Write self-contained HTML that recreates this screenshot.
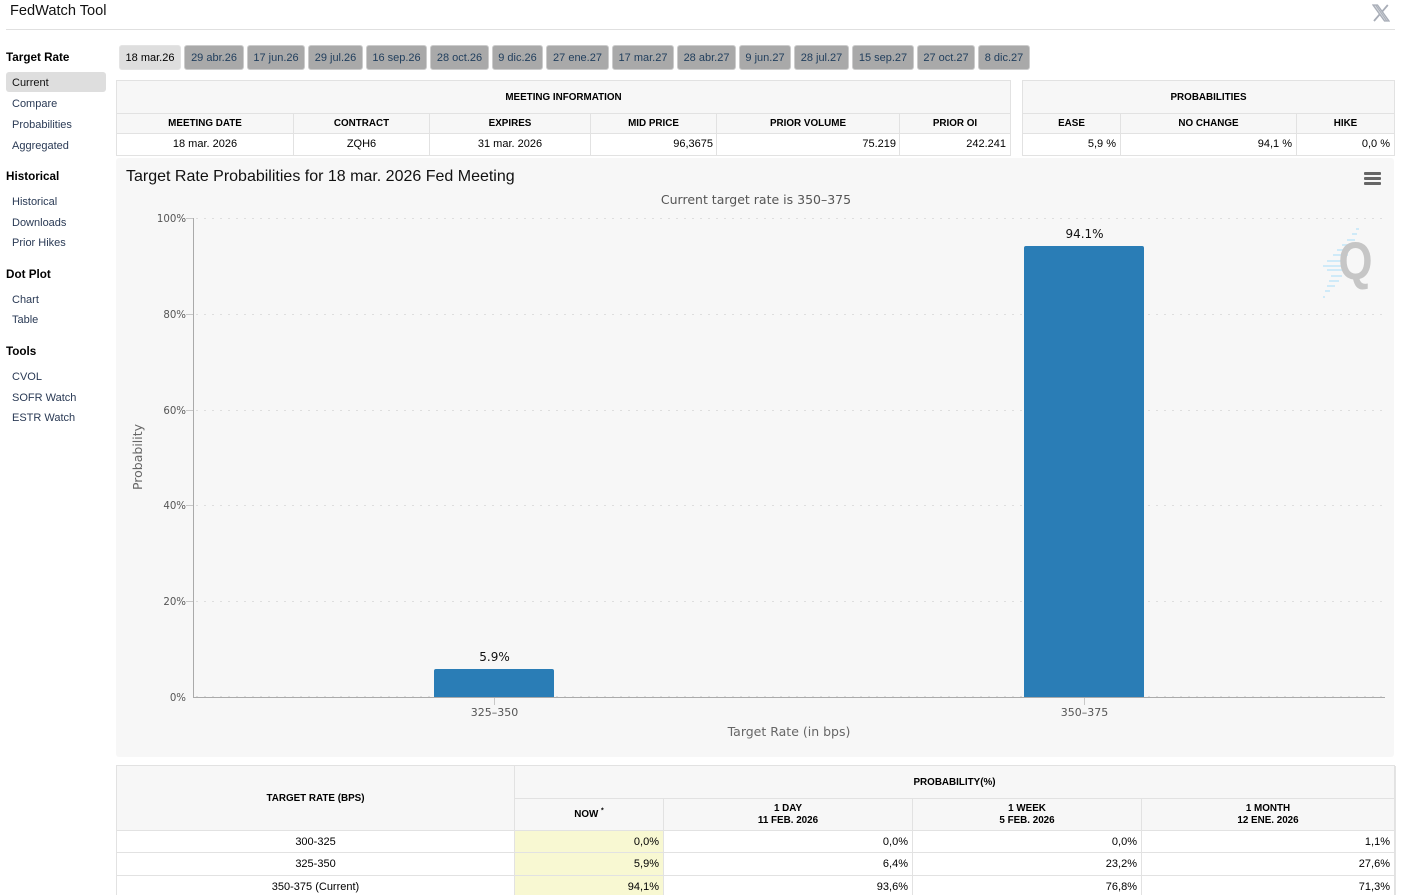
<!DOCTYPE html>
<html><head><meta charset="utf-8"><title>FedWatch Tool</title>
<style>
html,body{margin:0;padding:0;background:#fff;width:1404px;height:895px;overflow:hidden;font-family:"Liberation Sans",Arial,sans-serif;color:#000}
#w{position:relative;width:1404px;height:895px;overflow:hidden}
.a{position:absolute;white-space:nowrap}
.h{font-size:11.7px;font-weight:bold;color:#000;left:6px}
.n{font-size:11px;color:#2a3a55;left:12px}
.tab{position:absolute;top:45px;height:25px;line-height:24px;text-align:center;font-size:11px;color:#1f3d5c;background:#a9a9a9;border:1px solid #ccc;border-radius:3px;box-sizing:border-box}
.tab.on{background:#dedede;color:#000;border-color:#e4e4e4}
.c{position:absolute;box-sizing:border-box;border:1px solid #e2e2e2;font-size:11px;overflow:hidden;white-space:nowrap;margin:0}
.th{background:#f7f7f7;font-weight:bold;text-align:center;font-size:9.85px}
.td{background:#fff;text-align:center}
.r{text-align:right;padding-right:4px}
.r3{padding-right:3px}
.y{background:#f8f8d2}
</style></head><body><div id="w">
<div class="a" style="left:10px;top:3px;font-size:14.6px;color:#111">FedWatch Tool</div>
<div class="a" style="left:6px;top:29px;width:1389px;height:1px;background:#e0e0e0"></div>
<svg class="a" style="left:1372px;top:4px" width="18" height="18" viewBox="0 0 18 18"><path d="M1 1h4.500L17 17h-4.500z" fill="#d4d7dc" stroke="#a8adb7" stroke-width="1.300"/><path d="M4 1.500 14.500 16.500" stroke="#a8adb7" stroke-width="1" fill="none"/><path d="M15.800 1 10.300 7.400M7.800 10.200 2 17" stroke="#a8adb7" stroke-width="1.800" fill="none"/></svg>

<div class="a h" style="top:51px">Target Rate</div>
<div class="a" style="left:6px;top:72px;width:100px;height:20px;background:#dedede;border-radius:3px"></div>
<div class="a n" style="top:77px;color:#111">Current</div>
<div class="a n" style="top:98px">Compare</div>
<div class="a n" style="top:119px">Probabilities</div>
<div class="a n" style="top:140px">Aggregated</div>
<div class="a h" style="top:170px">Historical</div>
<div class="a n" style="top:196px">Historical</div>
<div class="a n" style="top:217px">Downloads</div>
<div class="a n" style="top:237px">Prior Hikes</div>
<div class="a h" style="top:268px">Dot Plot</div>
<div class="a n" style="top:294px">Chart</div>
<div class="a n" style="top:314px">Table</div>
<div class="a h" style="top:345px">Tools</div>
<div class="a n" style="top:371px">CVOL</div>
<div class="a n" style="top:392px">SOFR Watch</div>
<div class="a n" style="top:412px">ESTR Watch</div>

<div class="tab on" style="left:119px;width:62px">18 mar.26</div>
<div class="tab" style="left:184px;width:60px">29 abr.26</div>
<div class="tab" style="left:247px;width:58px">17 jun.26</div>
<div class="tab" style="left:308px;width:55px">29 jul.26</div>
<div class="tab" style="left:366px;width:61px">16 sep.26</div>
<div class="tab" style="left:430px;width:59px">28 oct.26</div>
<div class="tab" style="left:492px;width:51px">9 dic.26</div>
<div class="tab" style="left:546px;width:63px">27 ene.27</div>
<div class="tab" style="left:612px;width:62px">17 mar.27</div>
<div class="tab" style="left:677px;width:59px">28 abr.27</div>
<div class="tab" style="left:739px;width:52px">9 jun.27</div>
<div class="tab" style="left:794px;width:55px">28 jul.27</div>
<div class="tab" style="left:852px;width:62px">15 sep.27</div>
<div class="tab" style="left:917px;width:58px">27 oct.27</div>
<div class="tab" style="left:978px;width:52px">8 dic.27</div>

<div class="c th" style="left:116px;top:80px;width:895px;height:34px;line-height:34px">MEETING INFORMATION</div>
<div class="c th" style="left:116px;top:113px;width:178px;height:21px;line-height:20px">MEETING DATE</div>
<div class="c th" style="left:293px;top:113px;width:137px;height:21px;line-height:20px">CONTRACT</div>
<div class="c th" style="left:429px;top:113px;width:162px;height:21px;line-height:20px">EXPIRES</div>
<div class="c th" style="left:590px;top:113px;width:127px;height:21px;line-height:20px">MID PRICE</div>
<div class="c th" style="left:716px;top:113px;width:184px;height:21px;line-height:20px">PRIOR VOLUME</div>
<div class="c th" style="left:899px;top:113px;width:112px;height:21px;line-height:20px">PRIOR OI</div>
<div class="c td" style="left:116px;top:133px;width:178px;height:23px;line-height:21px">18 mar. 2026</div>
<div class="c td" style="left:293px;top:133px;width:137px;height:23px;line-height:21px">ZQH6</div>
<div class="c td" style="left:429px;top:133px;width:162px;height:23px;line-height:21px">31 mar. 2026</div>
<div class="c td r r3" style="left:590px;top:133px;width:127px;height:23px;line-height:21px">96,3675</div>
<div class="c td r r3" style="left:716px;top:133px;width:184px;height:23px;line-height:21px">75.219</div>
<div class="c td r" style="left:899px;top:133px;width:112px;height:23px;line-height:21px">242.241</div>

<div class="c th" style="left:1022px;top:80px;width:373px;height:34px;line-height:34px">PROBABILITIES</div>
<div class="c th" style="left:1022px;top:113px;width:99px;height:21px;line-height:20px">EASE</div>
<div class="c th" style="left:1120px;top:113px;width:177px;height:21px;line-height:20px">NO CHANGE</div>
<div class="c th" style="left:1296px;top:113px;width:99px;height:21px;line-height:20px">HIKE</div>
<div class="c td r" style="left:1022px;top:133px;width:99px;height:23px;line-height:21px">5,9 %</div>
<div class="c td r" style="left:1120px;top:133px;width:177px;height:23px;line-height:21px">94,1 %</div>
<div class="c td r" style="left:1296px;top:133px;width:99px;height:23px;line-height:21px">0,0 %</div>

<div class="a" style="left:116px;top:158px;width:1278px;height:599px;background:#f7f7f7;border-radius:3px"></div>
<svg class="a" style="left:116px;top:158px" width="1278" height="599" viewBox="116 158 1278 599">
<text x="126" y="181" font-family="Liberation Sans" font-size="16" fill="#111">Target Rate Probabilities for 18 mar. 2026 Fed Meeting</text>
<text x="756" y="204" text-anchor="middle" font-family="DejaVu Sans" font-size="12.500" fill="#555">Current target rate is 350–375</text>
<g fill="#666"><rect x="1364" y="172" width="17" height="3" rx="1"/><rect x="1364" y="177" width="17" height="3" rx="1"/><rect x="1364" y="182" width="17" height="3" rx="1"/></g>
<g stroke="#dedede" stroke-width="1" stroke-dasharray="2 6">
<path d="M196 218.500H1385M196 314.500H1385M196 410.500H1385M196 505.500H1385M196 601.500H1385M196 696.500H1385"/></g>
<g stroke="#c8c8c8"><path d="M186 218.500H193M186 314.500H193M186 410.500H193M186 505.500H193M186 601.500H193"/><path d="M494.500 698V705M1084.500 698V705"/></g>
<path d="M193.500 218V697.500H1385" stroke="#aaa" fill="none"/>
<path d="M434 697V671a2 2 0 0 1 2-2H552a2 2 0 0 1 2 2V697Z" fill="#2a7db6"/>
<path d="M1024 697V248a2 2 0 0 1 2-2H1142a2 2 0 0 1 2 2V697Z" fill="#2a7db6"/>
<g font-family="DejaVu Sans" font-size="10.200" fill="#555" text-anchor="end">
<text x="186" y="222">100%</text><text x="186" y="318">80%</text><text x="186" y="414">60%</text><text x="186" y="509">40%</text><text x="186" y="605">20%</text><text x="186" y="701">0%</text></g>
<g font-family="DejaVu Sans" font-size="11" fill="#555" text-anchor="middle"><text x="494.500" y="716">325–350</text><text x="1084.500" y="716">350–375</text></g>
<g font-family="DejaVu Sans" font-size="12" fill="#111" text-anchor="middle"><text x="494.500" y="661">5.9%</text><text x="1084.500" y="238">94.1%</text></g>
<text x="789" y="736" text-anchor="middle" font-family="DejaVu Sans" font-size="12.500" fill="#666">Target Rate (in bps)</text>
<text transform="translate(142 457) rotate(-90)" text-anchor="middle" font-family="DejaVu Sans" font-size="12.500" fill="#666">Probability</text>
<g fill="#cfeaf8"><rect x="1356" y="228" width="3" height="2"/><rect x="1352" y="233" width="5" height="2"/><rect x="1347" y="239" width="8" height="2"/><rect x="1342" y="244" width="10" height="2"/><rect x="1337" y="249" width="13" height="2"/><rect x="1333" y="254" width="15" height="2"/><rect x="1327" y="260" width="19" height="2"/><rect x="1323" y="265" width="19" height="2"/><rect x="1327" y="269" width="15" height="2"/><rect x="1331" y="275" width="11" height="2"/><rect x="1329" y="280" width="10" height="2"/><rect x="1327" y="285" width="8" height="2"/><rect x="1325" y="290" width="5" height="2"/><rect x="1323" y="296" width="2" height="2"/></g>
<text transform="translate(1355.500 279) scale(.95 1.150)" text-anchor="middle" font-family="Liberation Sans" font-weight="bold" font-size="46" fill="#c6c6c6">Q</text>
</svg>

<div class="a" style="left:1394px;top:766px;width:2px;height:129px;background:#e4e4e4"></div>
<div class="c th" style="left:116px;top:765px;width:399px;height:66px;line-height:65px">TARGET RATE (BPS)</div>
<div class="c th" style="left:514px;top:765px;width:881px;height:34px;line-height:34px">PROBABILITY(%)</div>
<div class="c th" style="left:514px;top:798px;width:150px;height:33px;line-height:32px">NOW <sup style="font-size:7px;line-height:0">*</sup></div>
<div class="c th" style="left:663px;top:798px;width:250px;height:33px;line-height:12px;padding-top:4px">1 DAY<br>11 FEB. 2026</div>
<div class="c th" style="left:912px;top:798px;width:230px;height:33px;line-height:12px;padding-top:4px">1 WEEK<br>5 FEB. 2026</div>
<div class="c th" style="left:1141px;top:798px;width:254px;height:33px;line-height:12px;padding-top:4px">1 MONTH<br>12 ENE. 2026</div>

<div class="c td" style="left:116px;top:830px;width:399px;height:23px;line-height:22px">300-325</div>
<div class="c td r y" style="left:514px;top:830px;width:150px;height:23px;line-height:22px">0,0%</div>
<div class="c td r" style="left:663px;top:830px;width:250px;height:23px;line-height:22px">0,0%</div>
<div class="c td r" style="left:912px;top:830px;width:230px;height:23px;line-height:22px">0,0%</div>
<div class="c td r" style="left:1141px;top:830px;width:254px;height:23px;line-height:22px">1,1%</div>

<div class="c td" style="left:116px;top:852px;width:399px;height:24px;line-height:22px">325-350</div>
<div class="c td r y" style="left:514px;top:852px;width:150px;height:24px;line-height:22px">5,9%</div>
<div class="c td r" style="left:663px;top:852px;width:250px;height:24px;line-height:22px">6,4%</div>
<div class="c td r" style="left:912px;top:852px;width:230px;height:24px;line-height:22px">23,2%</div>
<div class="c td r" style="left:1141px;top:852px;width:254px;height:24px;line-height:22px">27,6%</div>

<div class="c td" style="left:116px;top:875px;width:399px;height:24px;line-height:22px">350-375 (Current)</div>
<div class="c td r y" style="left:514px;top:875px;width:150px;height:24px;line-height:22px">94,1%</div>
<div class="c td r" style="left:663px;top:875px;width:250px;height:24px;line-height:22px">93,6%</div>
<div class="c td r" style="left:912px;top:875px;width:230px;height:24px;line-height:22px">76,8%</div>
<div class="c td r" style="left:1141px;top:875px;width:254px;height:24px;line-height:22px">71,3%</div>
</div></body></html>
